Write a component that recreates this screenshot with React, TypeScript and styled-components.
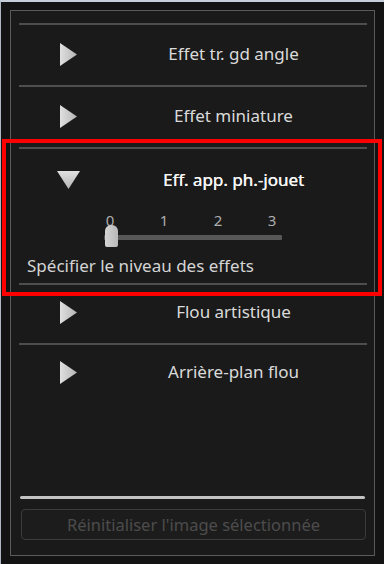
import React from "react";
import styled, { createGlobalStyle } from "styled-components";

const Global = createGlobalStyle`
  html, body { margin: 0; padding: 0; background: #121212; }
  * { box-sizing: border-box; }
`;

const Screen = styled.div`
  position: relative;
  width: 384px;
  height: 564px;
  background: #131313;
  border-top: 2px solid #c6cfd9;
  border-left: 1px solid #aeb8c4;
  padding: 8px 0 0 9px;
  font-family: "Noto Sans", "Liberation Sans", sans-serif;
  overflow: hidden;
`;

const Frame = styled.div`
  width: 365px;
  height: 546px;
  border: 1px solid #5a5a5a;
  background: #1a1a1a;
  padding: 12px 7px 15px 8px;
  display: flex;
  flex-direction: column;
`;

const Separator = styled.div`
  height: 2px;
  background: #4e4e4e;
  flex: none;
`;

const Row = styled.div<{ $h?: number; $pb?: number }>`
  height: ${(p) => p.$h ?? 60}px;
  display: flex;
  align-items: center;
  padding-bottom: ${(p) => p.$pb ?? 2}px;
  flex: none;
`;

const ArrowCell = styled.div`
  width: 81px;
  padding-left: 38px;
  display: flex;
  align-items: center;
  flex: none;
`;

const Label = styled.div<{ $active?: boolean }>`
  flex: 1;
  text-align: center;
  font-size: 17px;
  line-height: 22px;
  color: ${(p) => (p.$active ? "#f6f6f6" : "#dadada")};
  text-shadow: ${(p) => (p.$active ? "0.4px 0 0 #f6f6f6" : "none")};
  white-space: nowrap;
`;

const Expanded = styled.div`
  display: flex;
  flex-direction: column;
  padding-bottom: 7px;
  flex: none;
`;

const SliderBlock = styled.div`
  margin-left: 85px;
  width: 178px;
`;

const Ticks = styled.div`
  width: 174px;
  display: flex;
  justify-content: space-between;
  font-size: 15px;
  line-height: 14px;
  height: 14px;
  color: #adadad;
`;

const Tick = styled.span`
  width: 12px;
  text-align: center;
`;

const TrackArea = styled.div`
  position: relative;
  height: 22px;
  padding-top: 8px;
`;

const Track = styled.div`
  height: 5px;
  background: #575757;
  border-radius: 1px;
`;

const Thumb = styled.div`
  position: absolute;
  left: 1px;
  top: -2px;
  width: 13px;
  height: 22px;
  background: linear-gradient(90deg, #d4d4d4, #b8b8b8);
  border-radius: 6px 6px 2px 2px;
`;

const Description = styled.div`
  margin-top: 7px;
  padding-left: 8px;
  font-size: 17px;
  line-height: 20px;
  color: #d4d4d4;
  white-space: nowrap;
`;

const Spacer = styled.div`
  flex: 1;
`;

const LightRule = styled.div`
  height: 3px;
  margin: 0 2px 0 1px;
  background: #c2c2c2;
  border-radius: 2px;
  flex: none;
`;

const ResetButton = styled.button`
  margin: 10px 1px 0 2px;
  height: 31px;
  border: 1px solid #3b3b3b;
  border-radius: 4px;
  background: #1c1c1c;
  color: #4c4c4c;
  font-family: inherit;
  font-size: 16.5px;
  flex: none;
  padding: 0;
`;

const Highlight = styled.div`
  position: absolute;
  left: 1px;
  top: 137px;
  width: 380px;
  height: 157px;
  border: 4px solid #ff0000;
  pointer-events: none;
`;

const Arrow = ({ down }: { down?: boolean }) => (
  <svg width="23" height="23" viewBox="0 0 23 23">
    <defs>
      <linearGradient id={down ? "gd" : "gr"} x1="0" y1="0" x2={down ? "0" : "1"} y2={down ? "1" : "0"}>
        <stop offset="0" stopColor="#e0e0e0" />
        <stop offset="1" stopColor="#b4b4b4" />
      </linearGradient>
    </defs>
    {down ? (
      <polygon points="0,3 23,3 11.5,21" fill="url(#gd)" />
    ) : (
      <polygon points="3,0 20,11.5 3,23" fill="url(#gr)" />
    )}
  </svg>
);

const Section = ({ title, h, pb }: { title: string; h?: number; pb?: number }) => (
  <Row $h={h} $pb={pb}>
    <ArrowCell>
      <Arrow />
    </ArrowCell>
    <Label>{title}</Label>
  </Row>
);

export default function App() {
  return (
    <>
      <Global />
      <Screen>
        <Frame>
          <Separator />
          <Section title="Effet tr. gd angle" />
          <Separator />
          <Section title="Effet miniature" />
          <Separator />
          <Expanded>
            <Row $h={64} $pb={3}>
              <ArrowCell>
                <Arrow down />
              </ArrowCell>
              <Label $active>Eff. app. ph.-jouet</Label>
            </Row>
            <SliderBlock>
              <Ticks>
                <Tick>0</Tick>
                <Tick>1</Tick>
                <Tick>2</Tick>
                <Tick>3</Tick>
              </Ticks>
              <TrackArea>
                <Track />
                <Thumb />
              </TrackArea>
            </SliderBlock>
            <Description>Spécifier le niveau des effets</Description>
          </Expanded>
          <Separator />
          <Section title="Flou artistique" h={58} pb={4} />
          <Separator />
          <Section title="Arrière-plan flou" h={58} pb={4} />
          <Spacer />
          <LightRule />
          <ResetButton disabled>Réinitialiser l'image sélectionnée</ResetButton>
        </Frame>
        <Highlight />
      </Screen>
    </>
  );
}
